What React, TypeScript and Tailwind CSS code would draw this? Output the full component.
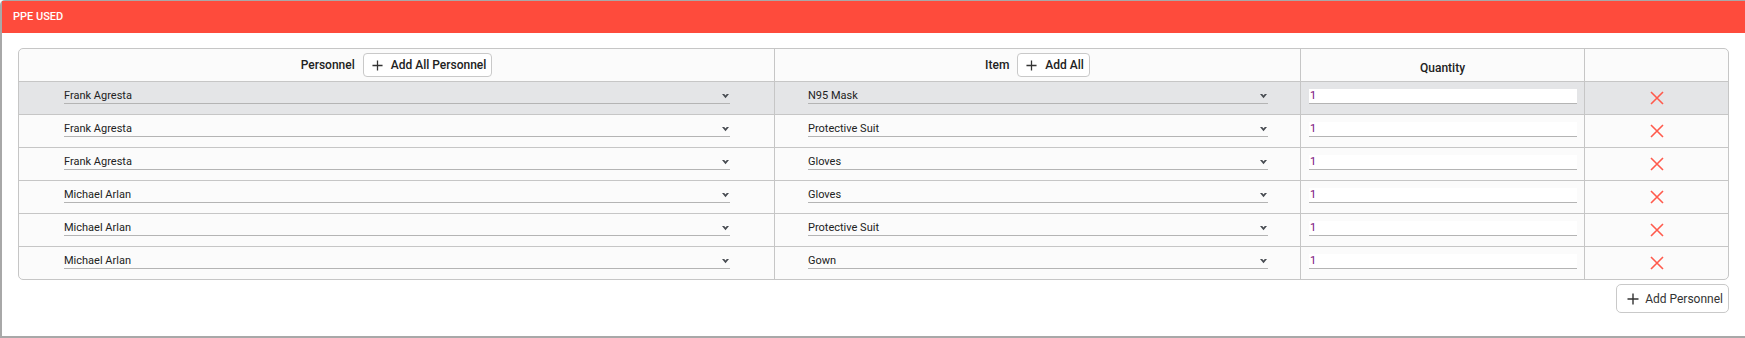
const ROWS = [
  { person: "Frank Agresta", item: "N95 Mask", qty: "1", active: true },
  { person: "Frank Agresta", item: "Protective Suit", qty: "1" },
  { person: "Frank Agresta", item: "Gloves", qty: "1" },
  { person: "Michael Arlan", item: "Gloves", qty: "1" },
  { person: "Michael Arlan", item: "Protective Suit", qty: "1" },
  { person: "Michael Arlan", item: "Gown", qty: "1" },
];

function Plus({ size = 11 }: { size?: number }) {
  return (
    <svg width={size} height={size} viewBox="0 0 12 12" aria-hidden="true">
      <path d="M6 0.5v11M0.5 6h11" stroke="#333" strokeWidth="1.4" fill="none" />
    </svg>
  );
}

function Chevron() {
  return (
    <svg width="7" height="5" viewBox="0 0 7 5" aria-hidden="true">
      <path d="M0 0 L2.2 0 L3.5 1.5 L4.8 0 L7 0 L3.5 4.2 Z" fill="#474b51" />
    </svg>
  );
}

function Cross() {
  return (
    <svg width="14" height="14" viewBox="0 0 14 14" aria-hidden="true">
      <path d="M1 1L13 13M13 1L1 13" stroke="#ff5a4c" strokeWidth="1.6" fill="none" />
    </svg>
  );
}

function Select({ value, width }: { value: string; width: string }) {
  return (
    <div className={`flex h-[15px] items-center justify-between border-b border-[#b4b4b4] pr-[1px] ${width}`}>
      <span className="text-[11px] leading-[14px] text-[#222]">{value}</span>
      <Chevron />
    </div>
  );
}

function HeaderButton({ label }: { label: string }) {
  return (
    <button className="flex h-6 items-center gap-2 rounded-[4px] border border-[#c9c9c9] bg-white pr-[5px] pl-[8px] text-[12px] font-medium text-[#222]">
      <Plus />
      {label}
    </button>
  );
}

export default function App() {
  const cell = "h-[33px] border-b border-[#c6c6c6]";
  return (
    <div className="h-[338px] w-[1745px] overflow-hidden bg-white font-['Roboto','Liberation_Sans',sans-serif]">
      <div className="h-[338px] w-[1760px] rounded-tl-[5px] border-t border-b-2 border-l-2 border-[#a8a8a8] bg-white">
        <div className="flex h-8 items-center bg-[#fe4b3c] pl-[11px] text-[11px] font-medium text-white">
          PPE USED
        </div>

        <div className="w-[1727px] pt-[15px] pl-4">
          <div className="grid grid-cols-[756px_526px_284px_143px] overflow-hidden rounded-[5px] border border-[#c6c6c6] bg-[#fbfbfb]">
            {/* header */}
            <div className={`${cell} flex items-center justify-center gap-2 border-r`}>
              <span className="text-[12px] font-medium text-[#222]">Personnel</span>
              <HeaderButton label="Add All Personnel" />
            </div>
            <div className={`${cell} flex items-center justify-center gap-2 border-r`}>
              <span className="text-[12px] font-medium text-[#222]">Item</span>
              <HeaderButton label="Add All" />
            </div>
            <div className={`${cell} flex items-end justify-center border-r pb-[5px]`}>
              <span className="text-[12px] leading-4 font-medium text-[#222]">Quantity</span>
            </div>
            <div className={cell} />

            {ROWS.map((r, i) => {
              const last = i === ROWS.length - 1;
              const c = `${last ? "h-8" : cell} ${r.active ? "bg-[#e4e5e7]" : ""}`;
              return [
                <div key={`p${i}`} className={`${c} flex items-start border-r border-[#c6c6c6] pt-[7px] pl-[45px]`}>
                  <Select value={r.person} width="w-[666px]" />
                </div>,
                <div key={`i${i}`} className={`${c} flex items-start border-r border-[#c6c6c6] pt-[7px] pl-[33px]`}>
                  <Select value={r.item} width="w-[460px]" />
                </div>,
                <div key={`q${i}`} className={`${c} flex items-start border-r border-[#c6c6c6] pt-[7px] pl-2`}>
                  <div className="flex h-[15px] w-[268px] items-center border-b border-[#b4b4b4] bg-white pl-[1px] text-[11px] leading-[14px] text-[#7a0f7a]">
                    {r.qty}
                  </div>
                </div>,
                <div key={`x${i}`} className={`${c} flex items-center justify-center`}>
                  <Cross />
                </div>,
              ];
            })}
          </div>

          <div className="mt-1 flex justify-end">
            <button className="flex h-[29px] items-center gap-[6px] rounded-[5px] border border-[#c9c9c9] bg-white pr-[5px] pl-[10px] text-[12px] text-[#333]">
              <Plus size={12} />
              Add Personnel
            </button>
          </div>
        </div>
      </div>
    </div>
  );
}
